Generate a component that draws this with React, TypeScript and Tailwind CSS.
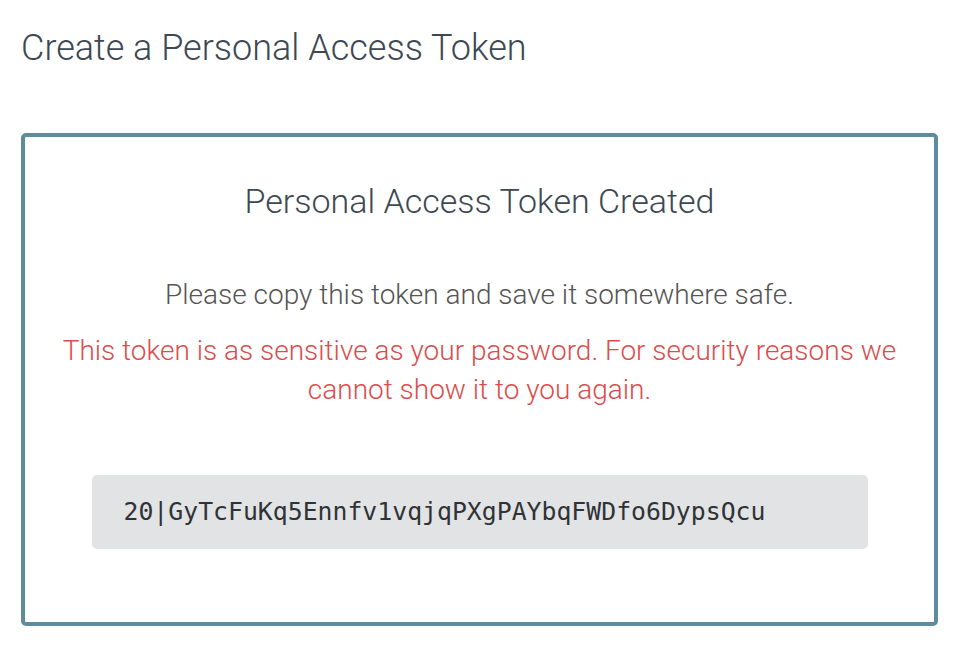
const TOKEN = '20|GyTcFuKq5Ennfv1vqjqPXgPAYbqFWDfo6DypsQcu';

const App = () => {
  return (
    <div className="min-h-screen bg-white px-[21px] pt-[26px] font-['Roboto',sans-serif] font-light">
      <h1 className="text-[36px] leading-[44px] text-[#3d4852]">Create a Personal Access Token</h1>
      <div className="mt-[63px] flex h-[493px] w-[917px] flex-col items-center rounded-[5px] border-4 border-[#5e8ba0] px-[36px] pt-[44px]">
        <h2 className="text-[34px] leading-[40px] text-[#3d4852]">Personal Access Token Created</h2>
        <p className="mt-[56px] text-[28px] leading-[36px] text-[#555555]">
          Please copy this token and save it somewhere safe.
        </p>
        <p className="mt-[18px] text-center text-[28px] leading-[39px] text-[#dc4c4c]">
          This token is as sensitive as your password. For security reasons we cannot show it to you
          again.
        </p>
        <div className="mt-[66px] flex h-[74px] w-[776px] shrink-0 items-center rounded-[5px] bg-[#e2e3e5] px-[32px]">
          <code className="font-['DejaVu_Sans_Mono',monospace] text-[24.8px] font-normal text-[#2f3336]">
            {TOKEN}
          </code>
        </div>
      </div>
    </div>
  );
};

export default App;
